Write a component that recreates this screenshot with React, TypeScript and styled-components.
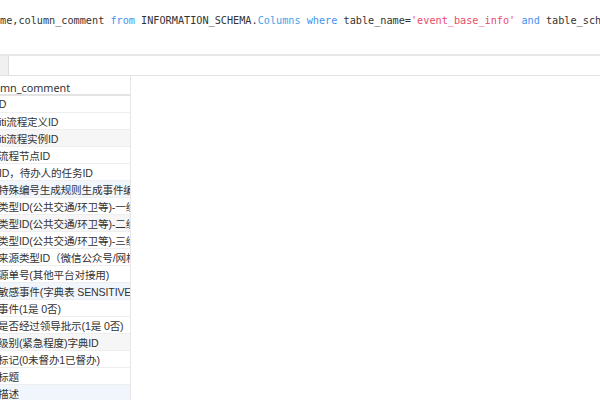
import React from 'react'
import styled, { createGlobalStyle } from 'styled-components'

const GlobalStyle = createGlobalStyle`
  html, body {
    margin: 0;
    padding: 0;
    background: #ffffff;
    overflow: hidden;
  }
`

const Page = styled.div`
  width: 600px;
  height: 400px;
  overflow: hidden;
  display: flex;
  flex-direction: column;
  background: #fff;
`

const Editor = styled.div`
  height: 54px;
  padding-top: 14px;
  box-sizing: border-box;
  overflow: hidden;
  flex-shrink: 0;
`

const CodeLine = styled.div`
  font-family: "DejaVu Sans Mono", "Liberation Mono", monospace;
  font-size: 10.2px;
  line-height: 14px;
  color: #333;
  white-space: pre;
`

const Token = styled.span<{ $kind: 'kw' | 'obj' | 'str' }>`
  color: ${p => (p.$kind === 'str' ? '#ec4a68' : p.$kind === 'obj' ? '#44a2ea' : '#4690f2')};
`

const Divider = styled.div`
  height: 2px;
  background: #e8e8e8;
  flex-shrink: 0;
`

const TabBar = styled.div`
  height: 19px;
  border-bottom: 1px solid #e2e2e2;
  display: flex;
  flex-shrink: 0;
`

const Tab = styled.div`
  width: 8px;
  background: #f0f0f0;
  border-right: 1px solid #dcdcdc;
`

const Grid = styled.div`
  flex: 1;
  display: flex;
  overflow: hidden;
`

const Column = styled.div`
  width: 130px;
  border-right: 1px solid #e6e6e6;
  display: flex;
  flex-direction: column;
  overflow: hidden;
`

const HeaderCell = styled.div`
  height: 20px;
  flex-shrink: 0;
  box-sizing: border-box;
  padding-top: 5px;
  border-bottom: 2px solid #e4e4e4;
  border-right: 1px solid #d6d6d6;
  margin-right: -1px;
  display: flex;
  align-items: center;
  font-family: "Noto Sans", "Noto Sans CJK SC", sans-serif;
  font-size: 10.8px;
  color: #333;
  white-space: nowrap;
`

const Cell = styled.div<{ $tone?: 'gray' | 'blue' }>`
  height: 17px;
  flex-shrink: 0;
  box-sizing: border-box;
  border-bottom: 1px solid #eeeeee;
  background: ${p => (p.$tone === 'gray' ? '#f6f6f6' : p.$tone === 'blue' ? '#f1f6fc' : '#ffffff')};
  display: flex;
  align-items: center;
  font-family: "Liberation Sans", "Noto Sans CJK SC", sans-serif;
  font-size: 10.6px;
  letter-spacing: -0.15px;
  color: #333;
  white-space: nowrap;
  overflow: hidden;
`

const CellText = styled.span<{ $shift?: number }>`
  margin-left: ${p => p.$shift ?? -2}px;
`

const rows: { text: string; tone?: 'gray' | 'blue'; shift?: number }[] = [
  { text: 'ID', shift: -4 },
  { text: 'iti流程定义ID', shift: -1 },
  { text: 'iti流程实例ID', tone: 'gray', shift: -1 },
  { text: '流程节点ID' },
  { text: 'ID，待办人的任务ID', shift: -1 },
  { text: '特殊编号生成规则生成事件编号', tone: 'blue' },
  { text: '类型ID(公共交通/环卫等)-一级' },
  { text: '类型ID(公共交通/环卫等)-二级', tone: 'gray' },
  { text: '类型ID(公共交通/环卫等)-三级' },
  { text: '来源类型ID（微信公众号/网格员）' },
  { text: '源单号(其他平台对接用)' },
  { text: '敏感事件(字典表 SENSITIVE_LEVEL)', tone: 'blue' },
  { text: '事件(1是 0否)' },
  { text: '是否经过领导批示(1是 0否)' },
  { text: '级别(紧急程度)字典ID', tone: 'gray' },
  { text: '标记(0未督办1已督办)' },
  { text: '标题' },
  { text: '描述', tone: 'blue' },
]

export default function App() {
  return (
    <Page>
      <GlobalStyle />
      <Editor>
        <CodeLine>
          me,column_comment <Token $kind="kw">from</Token> INFORMATION_SCHEMA.<Token $kind="obj">Columns</Token>{' '}
          <Token $kind="kw">where</Token> table_name=<Token $kind="str">'event_base_info'</Token>{' '}
          <Token $kind="kw">and</Token> table_schema
        </CodeLine>
      </Editor>
      <Divider />
      <TabBar>
        <Tab />
      </TabBar>
      <Grid>
        <Column>
          <HeaderCell>mn_comment</HeaderCell>
          {rows.map((r, i) => (
            <Cell key={i} $tone={r.tone}>
              <CellText $shift={r.shift}>{r.text}</CellText>
            </Cell>
          ))}
        </Column>
      </Grid>
    </Page>
  )
}
